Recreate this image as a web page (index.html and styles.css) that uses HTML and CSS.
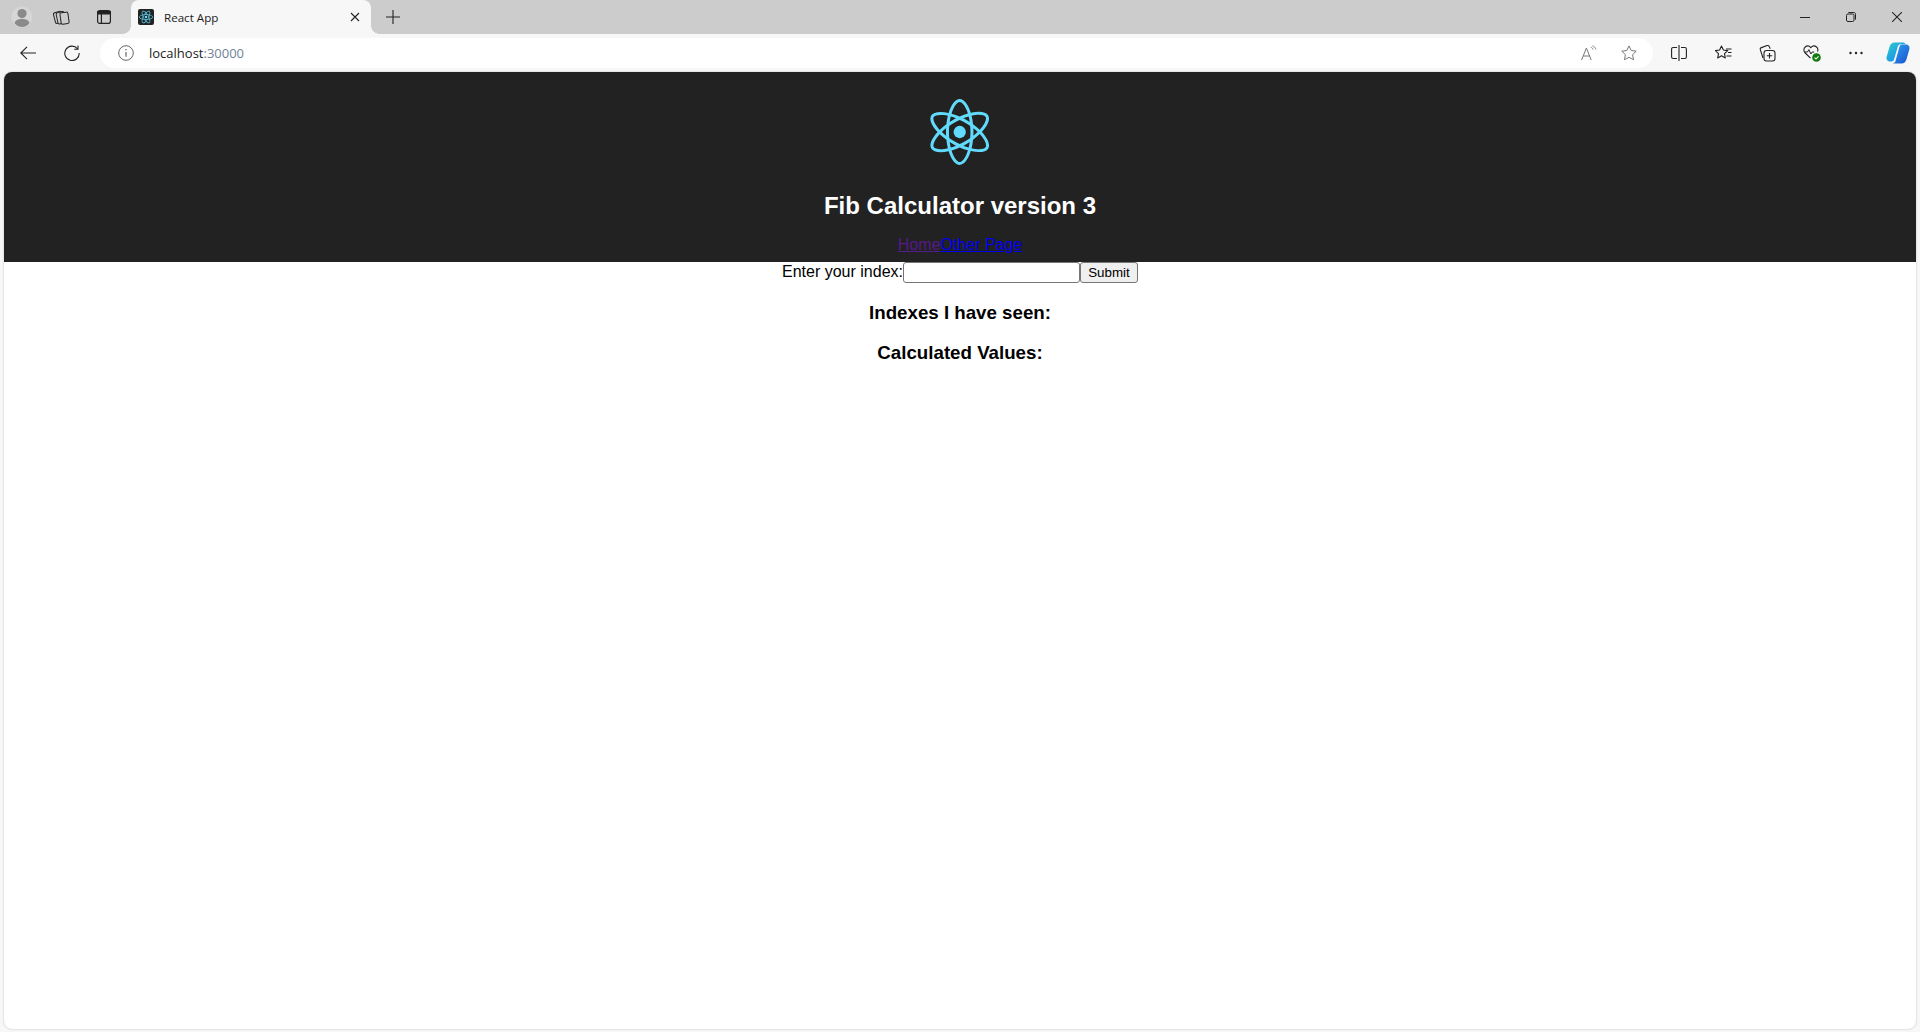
FILE: index.html
```html
<!DOCTYPE html>
<html lang="en">
<head>
<meta charset="utf-8">
<title>React App</title>
<link rel="stylesheet" href="styles.css">
</head>
<body>
<svg class="defs" width="0" height="0" aria-hidden="true">
  <defs>
    <g id="react">
      <path d="M666.3 296.5c0-32.5-40.7-63.3-103.1-82.4 14.4-63.6 8-114.2-20.2-130.4-6.5-3.8-14.1-5.6-22.4-5.6v22.3c4.6 0 8.3.9 11.4 2.6 13.6 7.8 19.5 37.5 14.9 75.7-1.1 9.4-2.9 19.3-5.1 29.4-19.6-4.8-41-8.5-63.5-10.9-13.5-18.5-27.5-35.3-41.6-50 32.6-30.3 63.2-46.9 84-46.9V78c-27.5 0-63.5 19.6-99.9 53.6-36.4-33.8-72.4-53.2-99.9-53.2v22.3c20.7 0 51.4 16.5 84 46.6-14 14.7-28 31.4-41.3 49.9-22.6 2.4-44 6.1-63.6 11-2.3-10-4-19.7-5.2-29-4.7-38.2 1.1-67.9 14.6-75.8 3-1.8 6.9-2.6 11.5-2.6V78.5c-8.4 0-16 1.8-22.6 5.6-28.1 16.2-34.4 66.7-19.9 130.1-62.2 19.2-102.7 49.9-102.7 82.3 0 32.5 40.7 63.3 103.1 82.4-14.4 63.6-8 114.2 20.2 130.4 6.5 3.8 14.1 5.6 22.5 5.6 27.5 0 63.5-19.6 99.9-53.6 36.4 33.8 72.4 53.2 99.9 53.2 8.4 0 16-1.8 22.6-5.6 28.1-16.2 34.4-66.7 19.9-130.1 62-19.1 102.5-49.9 102.5-82.3zm-130.2-66.7c-3.7 12.9-8.3 26.2-13.5 39.5-4.1-8-8.4-16-13.1-24-4.6-8-9.5-15.8-14.4-23.4 14.2 2.1 27.9 4.7 41 7.9zm-45.8 106.5c-7.8 13.5-15.8 26.3-24.1 38.2-14.9 1.3-30 2-45.2 2-15.1 0-30.2-.7-45-1.9-8.3-11.9-16.4-24.6-24.2-38-7.6-13.1-14.5-26.4-20.8-39.8 6.2-13.4 13.2-26.8 20.7-39.9 7.8-13.5 15.8-26.3 24.1-38.2 14.9-1.3 30-2 45.2-2 15.1 0 30.2.7 45 1.9 8.3 11.9 16.4 24.6 24.2 38 7.6 13.1 14.5 26.4 20.8 39.8-6.3 13.4-13.2 26.8-20.7 39.9zm32.3-13c5.4 13.4 10 26.8 13.8 39.8-13.1 3.2-26.9 5.9-41.2 8 4.9-7.7 9.8-15.6 14.4-23.7 4.6-8 8.9-16.1 13-24.1zM421.2 430c-9.3-9.6-18.6-20.3-27.8-32 9 .4 18.2.7 27.5.7 9.4 0 18.7-.2 27.8-.7-9 11.7-18.3 22.4-27.5 32zm-74.4-58.9c-14.2-2.1-27.9-4.7-41-7.9 3.7-12.9 8.3-26.2 13.5-39.5 4.1 8 8.4 16 13.1 24 4.7 8 9.5 15.8 14.4 23.4zM420.7 163c9.3 9.6 18.6 20.3 27.8 32-9-.4-18.2-.7-27.5-.7-9.4 0-18.7.2-27.8.7 9-11.7 18.3-22.4 27.5-32zm-74 58.9c-4.9 7.7-9.8 15.6-14.4 23.7-4.6 8-8.9 16-13 24-5.4-13.4-10-26.8-13.8-39.8 13.1-3.1 26.9-5.8 41.2-7.9zm-90.5 125.2c-35.4-15.1-58.3-34.9-58.3-50.6 0-15.7 22.9-35.6 58.3-50.6 8.6-3.7 18-7 27.7-10.1 5.7 19.6 13.2 40 22.5 60.9-9.2 20.8-16.6 41.1-22.2 60.6-9.9-3.1-19.3-6.5-28-10.2zM310 490c-13.6-7.8-19.5-37.5-14.9-75.7 1.1-9.4 2.9-19.3 5.1-29.4 19.6 4.8 41 8.5 63.5 10.9 13.5 18.5 27.5 35.3 41.6 50-32.6 30.3-63.2 46.9-84 46.9-4.5-.1-8.3-1-11.3-2.7zm237.2-76.2c4.7 38.2-1.1 67.9-14.6 75.8-3 1.8-6.9 2.6-11.5 2.6-20.7 0-51.4-16.5-84-46.6 14-14.7 28-31.4 41.3-49.9 22.6-2.4 44-6.1 63.6-11 2.3 10.1 4.1 19.8 5.2 29.1zm38.5-66.7c-8.6 3.7-18 7-27.7 10.1-5.7-19.6-13.2-40-22.5-60.9 9.2-20.8 16.6-41.1 22.2-60.6 9.9 3.1 19.3 6.5 28.1 10.2 35.4 15.1 58.3 34.9 58.3 50.6-.1 15.7-23 35.6-58.4 50.6z"/>
      <circle cx="420.9" cy="296.5" r="45.7"/>
    </g>
  </defs>
</svg>

<div class="tabstrip">
  <div class="strip-btn strip-profile">
    <svg width="22" height="22" viewBox="0 0 22 22"><circle cx="11" cy="11" r="10.5" fill="#d6d6d6"/><circle cx="11" cy="7.6" r="4.6" fill="#8a8a8a"/><path d="M3.6 17.2C4.4 13.8 7.2 13 11 13s6.6.8 7.4 4.2C16.6 19.6 14 21 11 21s-5.6-1.4-7.4-3.8z" fill="#8a8a8a"/></svg>
  </div>
  <div class="strip-btn strip-collections">
    <svg width="18" height="17" viewBox="0 0 18 17" fill="#ccc" stroke="#222" stroke-width="1"><rect x="2.500" y="3" width="8" height="11" rx="1.500" transform="rotate(-15 6 9)"/><rect x="5" y="3" width="8" height="11.500" rx="1.500" transform="rotate(-12 9 9)"/><rect x="8.500" y="3.500" width="8" height="11.500" rx="1.500" transform="rotate(-8 12 9)"/></svg>
  </div>
  <div class="strip-btn">
    <svg width="16" height="16" viewBox="0 0 16 16" fill="none" stroke="#222" stroke-width="1.200"><rect x="1.600" y="1.600" width="12.800" height="12.800" rx="2.200"/><path d="M1.600 2.600h12.800v2.400H1.600z" fill="#222"/><path d="M5.400 5v9.400"/></svg>
  </div>
  <div class="tab">
    <span class="favicon"><svg width="22" height="16" viewBox="140 40 562 512" fill="#61dafb"><use href="#react"/></svg></span>
    <span class="tab-title">React App</span>
    <svg class="tab-close" width="10" height="10" viewBox="0 0 10 10" stroke="#222" stroke-width="1.100" fill="none"><path d="M1 1l8 8M9 1L1 9"/></svg>
  </div>
  <div class="strip-btn strip-new">
    <svg width="14" height="14" viewBox="0 0 14 14" stroke="#222" stroke-width="1.100" fill="none"><path d="M7 0v14M0 7h14"/></svg>
  </div>
  <div class="window-controls">
    <div class="win-btn"><svg width="10" height="10" viewBox="0 0 10 10" stroke="#222" fill="none"><path d="M0 5.500h10"/></svg></div>
    <div class="win-btn"><svg width="10" height="10" viewBox="0 0 10 10" stroke="#222" fill="none"><rect x=".5" y="2" width="7.500" height="7.500" rx="1.400"/><path d="M2.400 .5h5.400c1 0 1.700.7 1.700 1.700v5.400"/></svg></div>
    <div class="win-btn"><svg width="10" height="10" viewBox="0 0 10 10" stroke="#222" stroke-width="1.050" fill="none"><path d="M0 0l10 10M10 0L0 10"/></svg></div>
  </div>
</div>

<div class="toolbar">
  <div class="tool tool-back">
    <svg width="16" height="14" viewBox="0 0 16 14" stroke="#222" stroke-width="1.100" fill="none"><path d="M16 7H.8M7 .8.8 7 7 13.200"/></svg>
  </div>
  <div class="tool tool-reload">
    <svg width="16" height="16" viewBox="0 0 16 16" stroke="#222" stroke-width="1.100" fill="none"><path d="M13.600 3.800A7.200 7.200 0 1 0 15.200 8"/><path d="M14 .4v3.800h-3.800"/></svg>
  </div>
  <div class="address">
    <svg class="info" width="16" height="16" viewBox="0 0 16 16" fill="none" stroke="#666"><circle cx="8" cy="8" r="7.300"/><path d="M8 7v4.800" stroke-width="1.200"/><circle cx="8" cy="4.700" r=".8" fill="#666" stroke="none"/></svg>
    <span class="url"><span class="url-host">localhost</span><span class="url-port">:30000</span></span>
    <span class="address-fill"></span>
    <svg class="read" width="17" height="16" viewBox="0 0 17 16" fill="none" stroke="#777" stroke-width="1"><path d="M.6 15 5.400 3 10.200 15M2.300 11h6.200"/><path d="M9.800 2.200c1.200.3 2 1.200 2.200 2.400M11.400.8c1.900.5 3.100 1.900 3.500 3.700" stroke-width=".9"/></svg>
    <svg class="star" width="16" height="16" viewBox="0 0 16 16" fill="none" stroke="#777"><path d="M8 .9l2.200 4.600 5 .7-3.600 3.500.9 5L8 12.300l-4.500 2.400.9-5L.8 6.200l5-.7z" stroke-linejoin="round"/></svg>
  </div>
  <div class="tool">
    <svg width="16" height="16" viewBox="0 0 16 16" fill="none" stroke="#222" stroke-width="1.100"><path d="M8 0v16M6 2.500H2.200C1.300 2.500.6 3.200.6 4.100v7.800c0 .9.7 1.600 1.600 1.600H6M10 2.500h3.800c.9 0 1.600.7 1.600 1.600v7.800c0 .9-.7 1.600-1.600 1.600H10"/></svg>
  </div>
  <div class="tool">
    <svg width="17" height="17" viewBox="0 0 17 17" fill="none" stroke="#222" stroke-width="1.100"><path d="M6.500 1l1.900 4 4.300.6-3.200 3 .8 4.400-3.800-2.200-3.800 2.200.8-4.400-3.200-3L4.600 5z" stroke-linejoin="round"/><path d="M11 4h5.500M13 7.500h3.500M11.500 11H16.500"/></svg>
  </div>
  <div class="tool">
    <svg width="17" height="18" viewBox="0 0 17 18" fill="none" stroke="#222" stroke-width="1.100"><path d="M4 14 1.300 5.600c-.3-.9.200-1.800 1.100-2l5.700-2c.9-.3 1.800.1 2.200 1l.9 2.100"/><rect x="5" y="6.500" width="11" height="10.500" rx="2.500"/><path d="M10.500 9v5.500M7.800 11.800h5.400"/></svg>
  </div>
  <div class="tool">
    <svg width="18" height="18" viewBox="0 0 18 18" fill="none"><path d="M7.500 14.200 2.200 9C.4 7.200.5 4.500 2.200 3c1.700-1.400 4-1.200 5.600.6 1.600-1.800 4-2 5.700-.6 1.400 1.200 1.700 3 1 4.600" stroke="#222" stroke-width="1.100"/><path d="M1.500 8h3l1.400-2.400 2 4.400 1.300-2h2" stroke="#222" stroke-width="1"/><circle cx="13.500" cy="13.500" r="4.300" fill="#107c10"/><path d="M11.500 13.600l1.500 1.400 2.500-2.700" stroke="#fff" stroke-width="1.100"/></svg>
  </div>
  <div class="tool tool-more">
    <svg width="14" height="4" viewBox="0 0 14 4" fill="#222"><circle cx="1.500" cy="2" r="1.200"/><circle cx="7" cy="2" r="1.200"/><circle cx="12.500" cy="2" r="1.200"/></svg>
  </div>
  <div class="tool tool-copilot">
    <svg width="24" height="24" viewBox="0 0 24 24">
      <defs>
        <linearGradient id="cpA" x1="0" y1="0" x2="1" y2="1"><stop offset="0" stop-color="#2fd0c8"/><stop offset=".6" stop-color="#1e9ce8"/><stop offset="1" stop-color="#35c8a0"/></linearGradient>
        <linearGradient id="cpB" x1="0" y1="0" x2="1" y2="1"><stop offset="0" stop-color="#2ea5ee"/><stop offset="1" stop-color="#1b4fd0"/></linearGradient>
      </defs>
      <path d="M8.500 1.500h8.500c1.200 0 2 .6 2.400 1.800l-4.800 0c-1.500 0-2.300.7-2.700 2L8 18.500c-.3 1.200-1.200 2-2.500 2H4.200C1.800 20.500 0 18.700.6 16L3.500 6C4.300 3.200 5.900 1.500 8.500 1.500z" fill="url(#cpA)"/>
      <path d="M16 3.500h3.800c2.400 0 4.200 1.800 3.600 4.400l-2.900 10.300c-.8 2.800-2.400 4.300-5 4.300H7l-.2-.2c1.500-.2 2.300-1 2.700-2.300L13.400 6c.4-1.500 1.200-2.500 2.600-2.500z" fill="url(#cpB)"/>
    </svg>
  </div>
</div>

<main class="viewport">
  <div class="app">
    <header class="app-header">
      <svg class="app-logo" viewBox="0 0 841.900 595.300" fill="#61dafb"><use href="#react"/></svg>
      <h1 class="app-title">Fib Calculator version 3</h1>
      <a class="nav-link nav-visited" href="#home">Home</a><a class="nav-link" href="#other">Other Page</a>
    </header>
    <form class="index-form">
      <label class="index-label">Enter your index:</label><input class="index-input" type="text"><button class="submit-btn" type="button">Submit</button>
    </form>
    <h3 class="section-title">Indexes I have seen:</h3>
    <h3 class="section-title">Calculated Values:</h3>
  </div>
</main>
</body>
</html>
```

FILE: styles.css
```css
* { box-sizing: border-box; }

html, body {
  margin: 0;
  height: 100%;
}

body {
  display: flex;
  flex-direction: column;
  background: #f7f7f7;
  overflow: hidden;
}

.defs { position: absolute; }

/* Tab strip */
.tabstrip {
  display: flex;
  align-items: center;
  height: 34px;
  flex: none;
  background: #cccccc;
  padding-left: 2px;
}

.strip-btn {
  display: flex;
  align-items: center;
  justify-content: center;
  width: 41px;
  height: 34px;
  flex: none;
}

.strip-profile { width: 40px; }
.strip-collections svg { margin-right: 3px; }

.tab {
  position: relative;
  display: flex;
  align-items: center;
  align-self: flex-end;
  width: 240px;
  height: 34px;
  margin-left: 7px;
  padding: 0 11px 0 7px;
  background: #f7f7f7;
  border-radius: 8px 8px 0 0;
  font-family: "Open Sans", sans-serif;
  font-size: 11.600px;
  color: #222;
}

.tab::before,
.tab::after {
  content: "";
  position: absolute;
  bottom: 0;
  width: 8px;
  height: 8px;
}

.tab::before {
  left: -8px;
  background: radial-gradient(circle at 0 0, transparent 7.500px, #f7f7f7 8px);
}

.tab::after {
  right: -8px;
  background: radial-gradient(circle at 100% 0, transparent 7.500px, #f7f7f7 8px);
}

.favicon {
  display: flex;
  align-items: center;
  justify-content: center;
  width: 16px;
  height: 16px;
  border-radius: 2px;
  background: #222;
  overflow: hidden;
  flex: none;
}

.tab-title {
  margin-left: 10px;
  flex: 1;
}

.tab-close { flex: none; }

.strip-new { width: 44px; }

.window-controls {
  display: flex;
  margin-left: auto;
}

.win-btn {
  display: flex;
  align-items: center;
  justify-content: center;
  width: 46px;
  height: 34px;
}

/* Toolbar */
.toolbar {
  display: flex;
  align-items: center;
  height: 38px;
  flex: none;
  padding-left: 6px;
  padding-right: 2px;
  background: #f7f7f7;
}

.tool {
  display: flex;
  align-items: center;
  justify-content: center;
  width: 44.500px;
  height: 38px;
  flex: none;
}

.tool-reload { width: 42.500px; }
.tool-more { width: 43.500px; }
.tool-copilot { width: 40px; }

.address {
  display: flex;
  align-items: center;
  flex: 1;
  height: 30px;
  margin-left: 7px;
  margin-right: 3.500px;
  padding: 0 16.500px 0 18px;
  background: #ffffff;
  border-radius: 15px;
  font-family: "Open Sans", sans-serif;
  font-size: 13px;
}

.url { margin-left: 15px; }
.url-host { color: #222; }
.url-port { color: #6f8296; }
.address-fill { flex: 1; }
.star { margin-left: 23px; }

/* Page viewport */
.viewport {
  flex: 1;
  margin: 0 4px 3px;
  min-height: 0;
  background: #ffffff;
  border-radius: 8px;
  box-shadow: 0 0 2px rgba(0, 0, 0, .25);
  overflow: hidden;
}

.app {
  text-align: center;
  font-family: "Liberation Sans", Arial, sans-serif;
  font-size: 16px;
  color: #000;
}

.app-header {
  height: 190px;
  padding: 20px;
  background: #222222;
  color: #fff;
}

.app-logo {
  display: inline-block;
  height: 80px;
  vertical-align: top;
  transform: rotate(90deg);
}

.app-title {
  margin: 20px 0 17px;
  font-size: 24px;
  line-height: 27px;
  font-weight: 700;
}

.nav-link { color: #0000ee; }
.nav-visited { color: #551a8b; }

.index-form {
  display: block;
  height: 21px;
}

.index-label { font-size: 16px; }

.index-input {
  width: 177px;
  height: 21px;
  margin: 0;
  padding: 1px 2px;
  border: 1px solid #767676;
  border-radius: 3px;
  background: #fff;
  font-family: "Liberation Sans", Arial, sans-serif;
  font-size: 13.333px;
}

.submit-btn {
  width: 58px;
  height: 21px;
  margin: 0;
  padding: 1px 6px;
  border: 1px solid #767676;
  border-radius: 3px;
  background: #efefef;
  color: #000;
  font-family: "Liberation Sans", Arial, sans-serif;
  font-size: 13.333px;
}

.section-title {
  margin: 18.720px 0;
  font-size: 18.720px;
  font-weight: 700;
}
```
